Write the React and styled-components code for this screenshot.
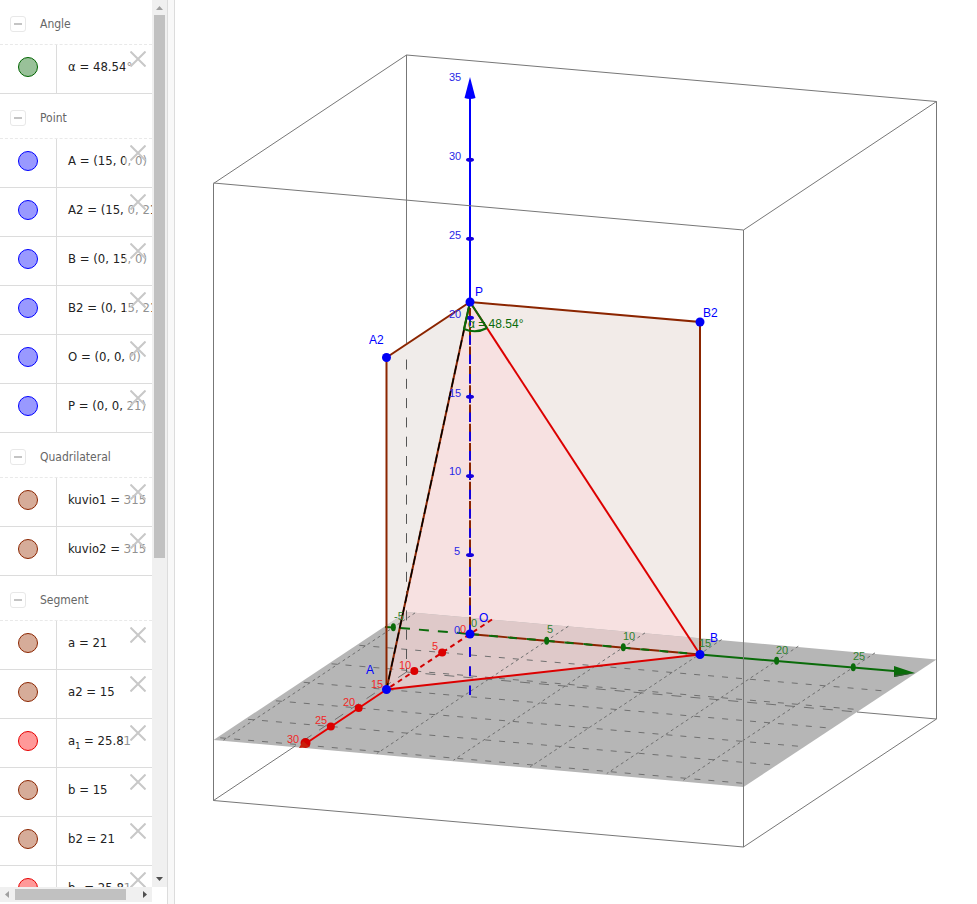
import React from 'react'
import styled, { createGlobalStyle } from 'styled-components'

const GlobalStyle = createGlobalStyle`
  * { box-sizing: border-box; }
  body {
    margin: 0;
    background: #fff;
    font-family: "DejaVu Sans Condensed", "DejaVu Sans", sans-serif;
  }
`

const Page = styled.div`
  display: flex;
  height: 100vh;
  overflow: hidden;
`

const Sidebar = styled.aside`
  display: grid;
  grid-template-columns: 152px 15px;
  grid-template-rows: minmax(0, 1fr) 15px;
  flex: none;
  padding-bottom: 2px;
`

const List = styled.div`
  overflow: hidden;
`

const GroupHeader = styled.header`
  display: flex;
  align-items: center;
  gap: 14px;
  height: 45px;
  padding: 4px 0 0 10px;
  border-bottom: 1px dashed #e9e9e9;
`

const Collapse = styled.button`
  display: grid;
  place-items: center;
  width: 16px;
  height: 16px;
  padding: 0;
  border: 1px solid #e8e8e8;
  border-radius: 3px;
  background: #fff;

  &::before {
    content: '';
    width: 8px;
    height: 2px;
    background: #c4c4c4;
  }
`

const GroupTitle = styled.h2`
  margin: 0;
  font: 400 12px/16px "DejaVu Sans Condensed", "DejaVu Sans", sans-serif;
  color: #666;
`

const Row = styled.div`
  position: relative;
  display: flex;
  height: 49px;
  border-bottom: 1px solid #dcdcdc;
`

const MarbleCell = styled.div`
  flex: none;
  width: 57px;
  padding: 12px 0 0 18px;
  border-right: 1px solid #dcdcdc;
`

const Marble = styled.button`
  display: block;
  width: 20px;
  height: 20px;
  padding: 0;
  border: 1px solid ${props => props.$line};
  border-radius: 50%;
  background: ${props => props.$fill};
`

const Formula = styled.div`
  padding: 12px 0 0 11px;
  font: 400 13px/20px "DejaVu Sans Condensed", "DejaVu Sans", sans-serif;
  white-space: nowrap;
  color: #222;

  sub {
    font-size: 9px;
    line-height: 0;
  }
`

const Close = styled.button`
  position: absolute;
  top: 0;
  right: 3px;
  display: flex;
  align-items: flex-start;
  justify-content: flex-end;
  width: 24px;
  height: 48px;
  padding: 6px 3px 0 0;
  border: 0;
  background: rgba(255, 255, 255, 0.5);
`

const ScrollTrack = styled.div`
  display: flex;
  flex-direction: ${props => (props.$vertical ? 'column' : 'row')};
  align-items: center;
  background: #f0f0f0;
`

const ScrollArrow = styled.svg`
  flex: none;
  width: 15px;
  height: 15px;
`

const ScrollBody = styled.div`
  display: flex;
  flex: 1;
  flex-direction: inherit;
  align-self: stretch;
  padding: ${props => (props.$vertical ? '0 2px' : '2px 0')};
`

const Thumb = styled.div`
  flex: 0 0 ${props => props.$size};
  background: #c1c1c1;
`

const Splitter = styled.div`
  flex: none;
  width: 8px;
  border: solid #dcdcdc;
  border-width: 0 1px;
  background: #f8f8f8;
`

const View = styled.main`
  flex: 1;
  min-width: 0;
`

const Canvas = styled.svg`
  display: block;
  width: 100%;
  height: 100%;
  font-family: "Liberation Sans", Arial, sans-serif;
`

const AxisText = styled.text`
  font-size: 11px;
  fill: ${props => props.$color};
`

const PointText = styled.text`
  font-size: 12px;
  fill: ${props => props.$color || '#0000ff'};
`

const marbles = {
  green: ['#006400', '#99c199'],
  blue: ['#0000ff', '#9999ff'],
  brown: ['#8b2500', '#d6ac99'],
  red: ['#e60000', '#ff9999'],
}

const groups = [
  { title: 'Angle', items: [['α', '48.54°', 'green']] },
  {
    title: 'Point',
    items: [
      ['A', '(15, 0, 0)', 'blue'],
      ['A2', '(15, 0, 21)', 'blue'],
      ['B', '(0, 15, 0)', 'blue'],
      ['B2', '(0, 15, 21)', 'blue'],
      ['O', '(0, 0, 0)', 'blue'],
      ['P', '(0, 0, 21)', 'blue'],
    ],
  },
  { title: 'Quadrilateral', items: [['kuvio1', '315', 'brown'], ['kuvio2', '315', 'brown']] },
  {
    title: 'Segment',
    items: [
      ['a', '21', 'brown'],
      ['a2', '15', 'brown'],
      ['a', '25.81', 'red', '1'],
      ['b', '15', 'brown'],
      ['b2', '21', 'brown'],
      ['b', '25.81', 'red', '1'],
    ],
  },
]

function Item({ item }) {
  const [name, value, color, sub] = item
  const [line, fill] = marbles[color]
  return (
    <Row>
      <MarbleCell>
        <Marble $line={line} $fill={fill} aria-label={`Show ${name}`} />
      </MarbleCell>
      <Formula>{name}{sub && <sub>{sub}</sub>} = {value}</Formula>
      <Close aria-label={`Delete ${name}`}>
        <svg width="16" height="16" viewBox="0 0 16 16" stroke="#c8c8c8" strokeWidth="2">
          <path d="M.5 .5l15 15M15.5 .5l-15 15" />
        </svg>
      </Close>
    </Row>
  )
}

function Arrow({ d, color }) {
  return <ScrollArrow viewBox="0 0 15 15"><path d={d} fill={color} /></ScrollArrow>
}

// parallel projection of the 3D scene
const project = (x, y, z = 0) => [
  470 - 5.567 * x + 15.33 * y,
  634 + 3.7 * x + 1.333 * y - 15.81 * z,
]

function Line({ from, to, ...rest }) {
  return <line x1={from[0]} y1={from[1]} x2={to[0]} y2={to[1]} {...rest} />
}

const O = project(0, 0)
const P = [470, 302]
const A = [386.5, 689.5]
const A2 = [386.5, 357.5]
const B = [700, 654.5]
const B2 = [700, 322]
const pts = (...list) => list.map(p => p.join(',')).join(' ')

const plane = '213.5,740 406.5,612 936.5,659.5 743.5,787'

function Box() {
  return (
    <g stroke="#777" fill="none">
      <path d="M406.5 343V55L213.5 183.5V800.5L743.5 847L936.5 719V101.5L406.5 55" />
      <path d="M213.5 183L743.5 230L936.5 101.5M743.5 230V847" />
      <path d="M213.5 800.5L293 747.5M936.5 719L857 712" />
    </g>
  )
}

function Grid() {
  return (
    <g stroke="#707070" fill="none">
      {[5, 10, 15, 20, 25, 30].map(x => (
        <Line key={x} from={project(x, -5.4)} to={project(x, 28.9)} strokeDasharray="6 8" />
      ))}
      {[-5, 5, 10, 15, 20, 25].map(y => (
        <Line key={y} from={project(-3.9, y)} to={project(30.5, y)} strokeDasharray="3 3" />
      ))}
      <path d="M406.5 672L293 747.5M406.5 672L857 712" strokeDasharray="10 9" />
    </g>
  )
}

function Scene() {
  return (
    <Canvas viewBox="175 0 802 904" preserveAspectRatio="xMinYMin meet" role="img" aria-label="3D view">
      <defs>
        <clipPath id="triangle"><polygon points={pts(P, A, B)} /></clipPath>
        <clipPath id="leftFace"><polygon points={pts(A2, P, A)} /></clipPath>
        <clipPath id="rightFace"><polygon points={pts(P, B2, B)} /></clipPath>
      </defs>

      <polygon points={pts(A2, P, A)} fill="#f0ecea" />
      <polygon points={pts(P, B2, B)} fill="#f2ebe8" />
      <polygon points={pts(P, A, B)} fill="#f7e1e1" />
      <polygon points={plane} fill="#b6b6b6" />
      <polygon points={plane} fill="#d3cfcd" clipPath="url(#leftFace)" />
      <polygon points={plane} fill="#c9c2bf" clipPath="url(#rightFace)" />
      <polygon points={plane} fill="#dfc9c9" clipPath="url(#triangle)" />
      <Grid />
      <path d="M406.5 359.5V672" stroke="#555" strokeDasharray="10 9.3" />

      <g strokeWidth="2" fill="none">
        <path d="M385 627L393 627.5" stroke="#0a6b0a" />
        <Line from={[400, 628]} to={O} stroke="#0a6b0a" strokeDasharray="10 9" />
        <Line from={O} to={B} stroke="#8b2500" strokeDasharray="17 2" strokeDashoffset="-2" />
        <Line from={O} to={B} stroke="#0a6b0a" strokeDasharray="9 10" />
        <Line from={B} to={[900, 671.5]} stroke="#0a6b0a" />
        <path d="M470 97V302" stroke="#0000ff" />
        <path d="M470 308V634" stroke="#8b2500" strokeDasharray="17.5 1.8" />
        <path d="M470 316V634" stroke="#1400dc" strokeDasharray="9.5 9.8" />
        <path d="M470 647V695" stroke="#1400dc" strokeDasharray="10 9.3" />
        <Line from={[492, 619.5]} to={A} stroke="#d20000" strokeDasharray="5 4" />
        <Line from={A} to={[305, 744]} stroke="#e60000" />
        <path d={`M${A}L${A2}L${P}L${B2}L${B}`} stroke="#8b2500" />
      </g>

      <g stroke="#dc0000" fill="none">
        <Line from={A} to={B} strokeWidth="2" />
        <Line from={P} to={B} strokeWidth="2" />
        <Line from={P} to={A} strokeWidth="2" stroke="#8b2500" />
        <Line from={P} to={A} stroke="#000" strokeWidth="1.5" strokeDasharray="9 4" />
      </g>
      <Box />

      <path d="M470 77L464.5 98Q470 100 475.5 98Z" fill="#0000ff" />
      <path d="M915 673L894 666V677Z" fill="#0a6b0a" />
      <path d="M895 675L915 673L894 677Z" fill="#375537" />
      <circle cx="305.5" cy="743" r="5" fill="#d20000" />
      <path d="M299 748L303 741L310 747Z" fill="#c81e0a" />

      {[5, 10, 15, 20, 25, 30].map(z => (
        <ellipse key={z} cx="470" cy={project(0, 0, z)[1]} rx="4" ry="2" fill="#1400dc" />
      ))}
      {[-5, 5, 10, 20, 25].map(y => (
        <ellipse key={y} cx={project(0, y)[0]} cy={project(0, y)[1]} rx="2.5" ry="4" fill="#0a6b0a" />
      ))}
      {[5, 10, 20, 25].map(x => (
        <circle key={x} cx={project(x, 0)[0]} cy={project(x, 0)[1]} r="4" fill="#dc0000" />
      ))}

      <path d="M487 328L470 302L464 329Q476 334 487 328" stroke="#0a6b0a" strokeWidth="2" fill="none" />
      {[O, P, A, A2, B, B2].map(p => (
        <circle key={p.join()} cx={p[0]} cy={p[1]} r="4.5" fill="#0000f5" />
      ))}

      <g>
        {[[35, 81], [30, 160], [25, 239], [20, 318], [15, 397], [10, 475], [5, 555], [0, 634]].map(([n, y]) => (
          <AxisText key={n} $color="#2828e6" x={n < 10 ? 454 : 449} y={y}>{n}</AxisText>
        ))}
        {[[-5, 394, 620], [0, 471, 627], [5, 547, 633], [10, 623, 640], [15, 699, 647], [20, 776, 654], [25, 853, 660]].map(([n, x, y]) => (
          <AxisText key={n} $color="#2d822d" x={x} y={y}>{n}</AxisText>
        ))}
        {[[0, 460, 633], [5, 432, 650], [10, 399, 669], [15, 371, 688], [20, 343, 706], [25, 315, 724], [30, 287, 743]].map(([n, x, y]) => (
          <AxisText key={n} $color="#f02828" x={x} y={y}>{n}</AxisText>
        ))}
        <PointText x="475" y="296">P</PointText>
        <PointText x="369" y="344">A2</PointText>
        <PointText x="703" y="317">B2</PointText>
        <PointText x="366" y="674">A</PointText>
        <PointText x="710" y="642">B</PointText>
        <PointText x="479" y="622">O</PointText>
        <PointText $color="#0a6b0a" x="468" y="328">α = 48.54°</PointText>
      </g>
    </Canvas>
  )
}

export default function App() {
  return (
    <Page>
      <GlobalStyle />
      <Sidebar>
        <List>
          {groups.map(group => (
            <section key={group.title}>
              <GroupHeader>
                <Collapse aria-label={`Collapse ${group.title}`} />
                <GroupTitle>{group.title}</GroupTitle>
              </GroupHeader>
              {group.items.map((item, i) => <Item key={i} item={item} />)}
            </section>
          ))}
        </List>
        <ScrollTrack $vertical>
          <Arrow d="M4 10L7.500 6L11 10Z" color="#a0a0a0" />
          <ScrollBody $vertical><Thumb $size="63.400%" /></ScrollBody>
          <Arrow d="M4 5L7.500 9L11 5Z" color="#505050" />
        </ScrollTrack>
        <ScrollTrack>
          <Arrow d="M9 4L5 7.500L9 11Z" color="#a0a0a0" />
          <ScrollBody><Thumb $size="91%" /></ScrollBody>
          <Arrow d="M6 4L10 7.500L6 11Z" color="#505050" />
        </ScrollTrack>
      </Sidebar>
      <Splitter />
      <View><Scene /></View>
    </Page>
  )
}
